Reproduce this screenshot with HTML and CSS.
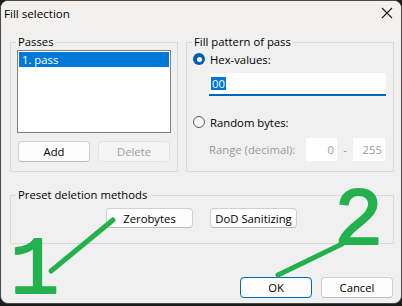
FILE: index.html
```html
<!DOCTYPE html>
<html>
<head>
<meta charset="utf-8">
<link rel="stylesheet" href="styles.css">
</head>
<body>
<div class="window">
  <div class="titlebar">
    <span class="title">Fill selection</span>
    <svg class="close" width="12" height="12" viewBox="0 0 12 12"><path d="M1 1 L11 11 M11 1 L1 11" stroke="#1a1a1a" stroke-width="1.1" fill="none"/></svg>
  </div>
  <div class="content">
    <div class="top-row">
      <fieldset class="group passes">
        <legend>Passes</legend>
        <div class="listbox">
          <div class="list-item selected">1. pass</div>
        </div>
        <div class="btn-row">
          <button class="btn">Add</button>
          <button class="btn disabled">Delete</button>
        </div>
      </fieldset>
      <fieldset class="group pattern">
        <legend>Fill pattern of pass</legend>
        <div class="radio-row">
          <span class="radio checked"></span>
          <span>Hex-values:</span>
        </div>
        <div class="hex-input"><span class="sel">00</span></div>
        <div class="radio-row second">
          <span class="radio"></span>
          <span>Random bytes:</span>
        </div>
        <div class="range-row">
          <span class="range-label">Range (decimal):</span>
          <span class="num-box small">0</span>
          <span class="dash">-</span>
          <span class="num-box">255</span>
        </div>
      </fieldset>
    </div>
    <fieldset class="group preset">
      <legend>Preset deletion methods</legend>
      <div class="preset-row">
        <button class="btn wide">Zerobytes</button>
        <button class="btn wide">DoD Sanitizing</button>
      </div>
    </fieldset>
    <div class="footer">
      <button class="btn default">OK</button>
      <button class="btn">Cancel</button>
    </div>
  </div>
  <svg class="annot" width="402" height="306" viewBox="0 0 402 306">
    <line x1="51" y1="271" x2="113" y2="220" stroke="#22b14c" stroke-width="5" stroke-linecap="round"/>
    <line x1="278" y1="275" x2="342" y2="244" stroke="#22b14c" stroke-width="5" stroke-linecap="round"/>
    <text x="10" y="293" class="digit">1</text>
    <text x="334" y="244" class="digit">2</text>
  </svg>
</div>
</body>
</html>
```
FILE: styles.css
```css
html, body {
  margin: 0;
  padding: 0;
  background: #1c1c1c;
}
body {
  width: 402px;
  height: 306px;
  overflow: hidden;
  font-family: "Open Sans", "Noto Sans", sans-serif;
  font-size: 11.3px;
  color: #000;
}
.window {
  position: relative;
  box-sizing: border-box;
  width: 402px;
  height: 304px;
  border: 1px solid #4a4a4a;
  border-radius: 8px;
  background: #f0f0f0;
  overflow: hidden;
  display: flex;
  flex-direction: column;
}
.titlebar {
  height: 25px;
  background: #f3f1ef;
  display: flex;
  align-items: center;
  justify-content: space-between;
  padding: 0 8px 0 3px;
  flex-shrink: 0;
}
.title {
  font-size: 11.6px;
  margin-top: -1px;
}
.close {
  display: block;
  margin-top: -2px;
}
.content {
  padding: 8px 7px 0 9px;
  display: flex;
  flex-direction: column;
}
.top-row {
  display: flex;
  gap: 8px;
}
.group {
  margin: 0;
  border: 1px solid #dadada;
  border-radius: 0;
  padding: 0 6px 9px;
  min-width: 0;
}
.group legend {
  padding: 0 2px;
  margin-left: -1px;
  line-height: 16px;
  height: 16px;
}
.passes {
  width: 154px;
}
.pattern {
  flex: 1;
  padding-bottom: 7px;
}
.listbox {
  height: 79px;
  border: 1px solid #7f7f7f;
  background: #fff;
  padding: 1px;
}
.list-item {
  height: 15px;
  line-height: 15px;
  padding-left: 3px;
}
.list-item.selected {
  background: #0078d7;
  color: #fff;
}
.btn-row {
  display: flex;
  justify-content: space-between;
  padding: 0 1px;
  margin-top: 8px;
}
.btn {
  font-family: inherit;
  font-size: inherit;
  color: #000;
  box-sizing: border-box;
  width: 72px;
  height: 21px;
  padding: 0;
  background: #fdfdfd;
  border: 1px solid #d0d0d0;
  border-bottom-color: #bcbcbc;
  border-radius: 4px;
  line-height: 18px;
}
.btn.disabled {
  background: #f5f5f5;
  border-color: #e3e3e3;
  color: #9d9d9d;
}
.btn.default {
  border: 1px solid #0067c0;
}
.btn.wide {
  width: 87px;
  height: 20px;
  line-height: 17px;
}
.radio-row {
  height: 18px;
  display: flex;
  align-items: center;
  gap: 5px;
}
.radio-row.second {
  margin-top: 17px;
}
.radio {
  box-sizing: border-box;
  width: 12px;
  height: 12px;
  border-radius: 50%;
  border: 1px solid #5d5d5d;
  background: #f7f7f7;
  display: flex;
  align-items: center;
  justify-content: center;
}
.radio.checked {
  border: none;
  background: #005fb8;
}
.radio.checked::after {
  content: "";
  width: 5px;
  height: 5px;
  border-radius: 50%;
  background: #fff;
}
.hex-input {
  margin: 5px 0 0 16px;
  width: 177px;
  background: #fff;
  border-bottom: 2px solid #0067c0;
  display: flex;
  align-items: center;
  padding-left: 2px;
  box-sizing: border-box;
  height: 23px;
}
.sel {
  background: #0078d7;
  color: #fff;
  line-height: 13px;
  padding: 0 1px 0 1px;
}
.range-row {
  margin: 7px 0 0 16px;
  display: flex;
  align-items: center;
  height: 23px;
  color: #9a9a9a;
}
.range-label {
  width: 97px;
}
.num-box {
  width: 32px;
  height: 23px;
  background: #fff;
  color: #9a9a9a;
  display: flex;
  align-items: center;
  justify-content: flex-end;
  padding-right: 3px;
  box-sizing: border-box;
}
.num-box.small {
  width: 31px;
}
.dash {
  width: 16px;
  text-align: center;
}
.preset {
  margin-top: 15px;
  padding-bottom: 15px;
}
.preset-row {
  display: flex;
  justify-content: center;
  gap: 17px;
  margin-top: 5px;
  padding-right: 1px;
}
.footer {
  display: flex;
  justify-content: flex-end;
  gap: 9px;
  margin-top: 33px;
  padding-right: 1px;
}
.annot {
  position: absolute;
  left: -1px;
  top: -1px;
  pointer-events: none;
}
.digit {
  font-family: "Liberation Mono", monospace;
  font-size: 82px;
  fill: #22b14c;
  stroke: #22b14c;
  stroke-width: 2px;
  stroke-linejoin: round;
}
```
